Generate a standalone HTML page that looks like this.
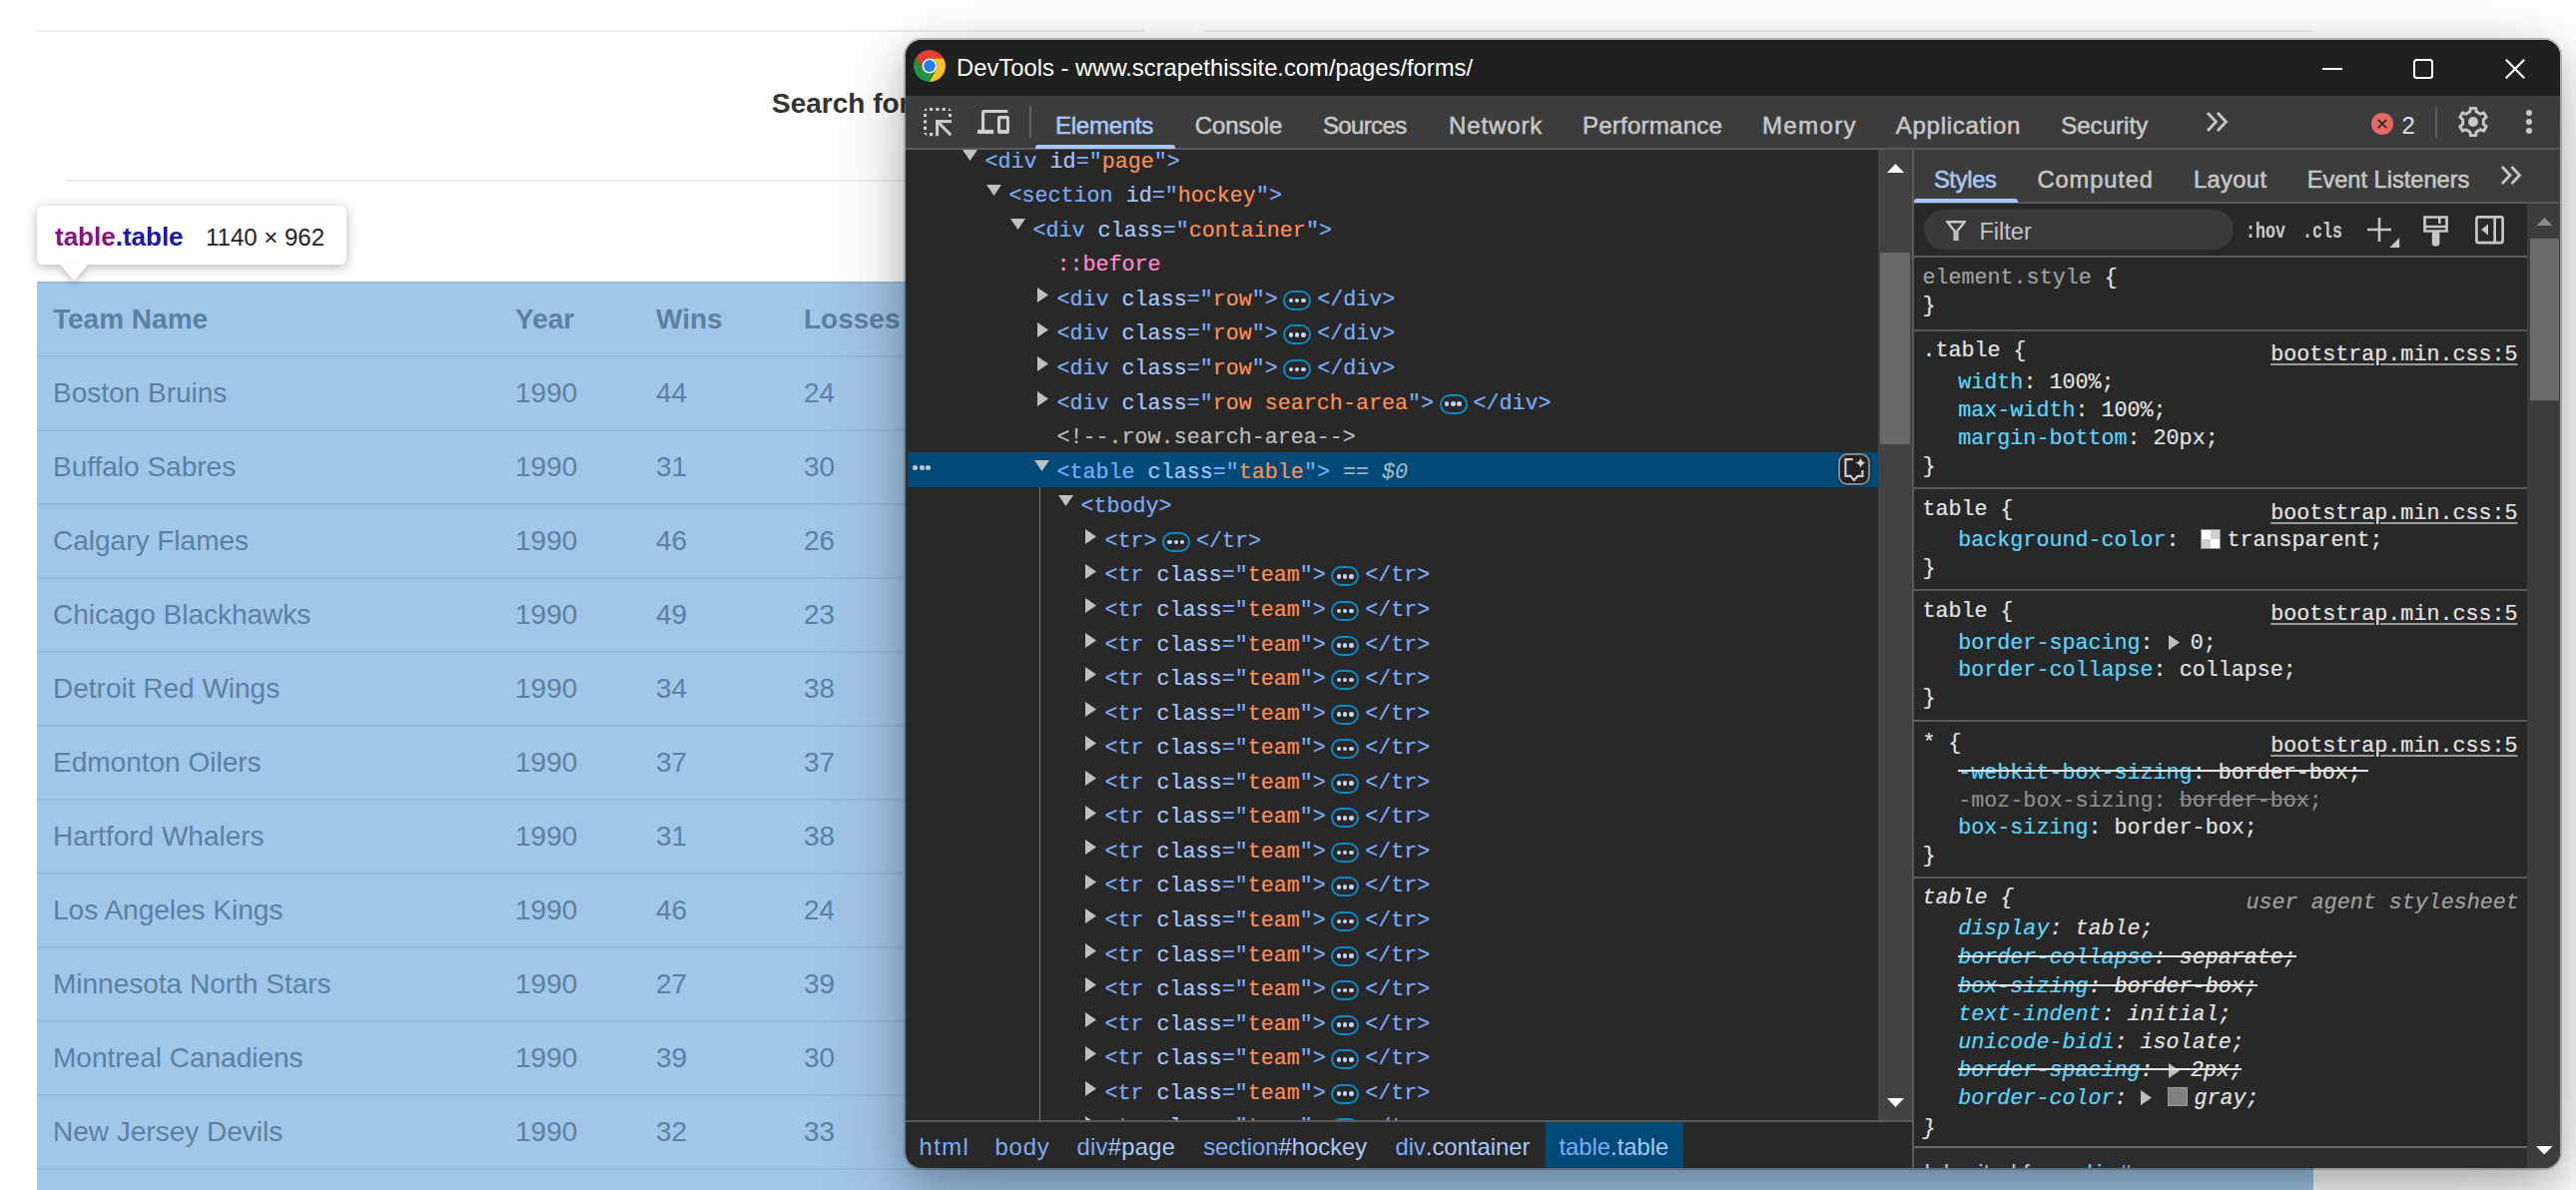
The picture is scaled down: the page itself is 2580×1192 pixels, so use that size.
<!DOCTYPE html>
<html><head><meta charset="utf-8">
<style>
*{box-sizing:border-box}
html,body{margin:0;padding:0}
body{width:2580px;height:1192px;position:relative;overflow:hidden;background:#fff;font-family:"Liberation Sans",sans-serif}
.a{position:absolute;white-space:pre}
.hr{position:absolute;height:2px;background:#eee}
.h3{position:absolute;left:773px;top:84px;font:bold 28px/40px "Liberation Sans",sans-serif;color:#333;white-space:nowrap}
table.t{position:absolute;left:37px;top:282px;width:2280px;border-collapse:collapse;font:28px/40px "Liberation Sans",sans-serif;color:#333}
table.t td,table.t th{border-top:2px solid #ddd;padding:16px;text-align:left;vertical-align:top;white-space:nowrap}
.ov{position:absolute;left:37px;top:282px;width:2280px;height:920px;background:rgba(111,168,220,.66)}
.tip{position:absolute;left:37px;top:206px;width:310px;height:59px;background:#fff;border-radius:6px;box-shadow:0 2px 12px rgba(0,0,0,.30)}
.tipar{position:absolute;left:59px;top:264px;width:0;height:0;border-left:15px solid transparent;border-right:15px solid transparent;border-top:17px solid #fff;filter:drop-shadow(0 4px 3px rgba(0,0,0,.2))}
.shadow{position:absolute;left:907px;top:40px;width:1657px;height:1129.5px;border-radius:16px;box-shadow:0 12px 36px rgba(0,0,0,.22),0 28px 90px rgba(0,0,0,.2)}
.winbg{position:absolute;left:907px;top:40px;width:1657px;height:1129.5px;border-radius:16px;background:#282828;box-shadow:0 0 0 2px rgba(60,60,60,.3)}
.clip{position:absolute;overflow:hidden}
.btn{position:absolute;width:28px;height:20px;border:2.2px solid #0a8bc9;border-radius:10px}
.btn i{position:absolute;top:5.7px;width:4.6px;height:4.6px;border-radius:50%;background:#c2d6f5}
</style></head>
<body>

<div class="hr" style="left:36px;top:30px;width:1110px"></div>
<div class="hr" style="left:1206px;top:30px;width:1110px"></div>
<div class="hr" style="left:66px;top:180px;width:2220px"></div>
<div class="h3">Search for Teams</div>
<table class="t"><tr><th style="width:463px">Team Name</th><th style="width:141px">Year</th><th style="width:148px">Wins</th><th>Losses</th></tr>
<tr><td>Boston Bruins</td><td>1990</td><td>44</td><td>24</td></tr>
<tr><td>Buffalo Sabres</td><td>1990</td><td>31</td><td>30</td></tr>
<tr><td>Calgary Flames</td><td>1990</td><td>46</td><td>26</td></tr>
<tr><td>Chicago Blackhawks</td><td>1990</td><td>49</td><td>23</td></tr>
<tr><td>Detroit Red Wings</td><td>1990</td><td>34</td><td>38</td></tr>
<tr><td>Edmonton Oilers</td><td>1990</td><td>37</td><td>37</td></tr>
<tr><td>Hartford Whalers</td><td>1990</td><td>31</td><td>38</td></tr>
<tr><td>Los Angeles Kings</td><td>1990</td><td>46</td><td>24</td></tr>
<tr><td>Minnesota North Stars</td><td>1990</td><td>27</td><td>39</td></tr>
<tr><td>Montreal Canadiens</td><td>1990</td><td>39</td><td>30</td></tr>
<tr><td>New Jersey Devils</td><td>1990</td><td>32</td><td>33</td></tr>
<tr><td>New York Islanders</td><td>1990</td><td>25</td><td>45</td></tr>
</table><div class="ov"></div>
<div class="tip"></div><div class="tipar"></div>
<div class="a" style="left:55.00px;top:222.00px;font:normal bold 26px/30px 'Liberation Sans',sans-serif;color:#881280;">table</div>
<div class="a" style="left:115.68px;top:222.00px;font:normal bold 26px/30px 'Liberation Sans',sans-serif;color:#1a1aa6;">.table</div>
<div class="a" style="left:206.00px;top:224.00px;font:normal normal 24px/27px 'Liberation Sans',sans-serif;color:#222;">1140 × 962</div>
<div class="shadow"></div><div class="winbg"></div>
<div class="clip" style="left:907px;top:40px;width:1657px;height:1129.5px;border-radius:16px">
<div style="position:absolute;left:-907px;top:-40px;width:2580px;height:1192px">
<div class="a" style="left:906.00px;top:39.00px;width:1658.00px;height:57.00px;background:#1f2020;"></div>
<svg class="a" style="left:915px;top:50px;" width="32" height="32" viewBox="0 0 32 32"><g transform="translate(16.0,16.0)">
<path d="M0.00,-7.60 L14.08,-7.60 A16.0,16.0 0 0 0 -13.62,-8.39 L-6.58,3.80 A7.6,7.6 0 0 1 0.00,-7.60 Z" fill="#e33e32"/>
<path d="M6.58,3.80 L-0.46,15.99 A16.0,16.0 0 0 0 14.08,-7.60 L0.00,-7.60 A7.6,7.6 0 0 1 6.58,3.80 Z" fill="#fcc31e"/>
<path d="M-6.58,3.80 L-13.62,-8.39 A16.0,16.0 0 0 0 -0.46,15.99 L6.58,3.80 A7.6,7.6 0 0 1 -6.58,3.80 Z" fill="#219541"/>
<circle r="7.6" fill="#fff"/><circle r="5.9" fill="#2b7ce9"/></g></svg>
<div class="a" style="left:958.00px;top:54.10px;font:normal normal 23.8px/27px 'Liberation Sans',sans-serif;color:#ffffff;">DevTools - www.scrapethissite.com/pages/forms/</div>
<div class="a" style="left:2326.00px;top:68.00px;width:20.00px;height:2.20px;background:#fff;"></div>
<div class="a" style="left:2417px;top:59.3px;width:20px;height:19.5px;border:2.2px solid #fff;border-radius:3.5px"></div>
<svg class="a" style="left:2509px;top:59px;" width="20" height="20" viewBox="0 0 20 20"><path d="M0.8,0.8 L19.2,19.2 M19.2,0.8 L0.8,19.2" stroke="#fff" stroke-width="2.2"/></svg>
<div class="a" style="left:906.00px;top:96.00px;width:1658.00px;height:52.00px;background:#3c3c3c;"></div>
<div class="a" style="left:906.00px;top:148.00px;width:1658.00px;height:2.00px;background:#5a5a5a;"></div>
<svg class="a" style="left:924px;top:107px;" width="31" height="31" viewBox="0 0 31 31"><g fill="#d0d0d0">
<polygon points="4.1,1 4.1,3.9 1,3.9"/><polygon points="26,1 29.1,3.9 26,3.9"/><polygon points="1,26 4.1,26 4.1,29.2"/>
<rect x="7" y="1" width="3.2" height="2.9"/><rect x="13.1" y="1" width="3.4" height="2.9"/><rect x="19.6" y="1" width="3.2" height="2.9"/>
<rect x="1" y="7.1" width="3.1" height="2.9"/><rect x="1" y="13.4" width="3.1" height="3.1"/><rect x="1" y="19.7" width="3.1" height="3.2"/>
<rect x="26" y="7.1" width="3.1" height="2.9"/><rect x="7" y="26" width="3.2" height="3.2"/>
<rect x="13.1" y="13.1" width="3" height="16.1"/><rect x="13.1" y="13.1" width="16" height="3"/>
</g><path d="M14.8,14.8 L28.3,28.3" stroke="#d0d0d0" stroke-width="3"/></svg>
<svg class="a" style="left:979px;top:109px;" width="33" height="26" viewBox="0 0 33 26"><g fill="#d0d0d0">
<path d="M4,21 V4 Q4,1 7,1 H30.2 V3.9 H7.1 V21 Z"/>
<rect x="0" y="20.9" width="16.1" height="4.1"/>
<path fill-rule="evenodd" d="M22,7 H29.9 Q31.9,7 31.9,9 V23 Q31.9,25 29.9,25 H22 Q20,25 20,23 V9 Q20,7 22,7 Z M23.1,10.2 V20.9 H29 V10.2 Z"/>
</g></svg>
<div class="a" style="left:1031.00px;top:106.00px;width:1.80px;height:32.00px;background:#5f5f5f;"></div>
<div class="a" style="left:1057.00px;top:111.80px;font:normal normal 24.0px/27px 'Liberation Sans',sans-serif;color:#a8c7fa;-webkit-text-stroke:0.55px currentColor;letter-spacing:-0.26px">Elements</div>
<div class="a" style="left:1196.80px;top:111.80px;font:normal normal 24.0px/27px 'Liberation Sans',sans-serif;color:#c7c7c7;-webkit-text-stroke:0.55px currentColor;letter-spacing:-0.1px">Console</div>
<div class="a" style="left:1324.90px;top:111.80px;font:normal normal 24.0px/27px 'Liberation Sans',sans-serif;color:#c7c7c7;-webkit-text-stroke:0.55px currentColor;letter-spacing:-0.62px">Sources</div>
<div class="a" style="left:1451.00px;top:111.80px;font:normal normal 24.0px/27px 'Liberation Sans',sans-serif;color:#c7c7c7;-webkit-text-stroke:0.55px currentColor;letter-spacing:0.87px">Network</div>
<div class="a" style="left:1585.00px;top:111.80px;font:normal normal 24.0px/27px 'Liberation Sans',sans-serif;color:#c7c7c7;-webkit-text-stroke:0.55px currentColor;letter-spacing:0.25px">Performance</div>
<div class="a" style="left:1764.90px;top:111.80px;font:normal normal 24.0px/27px 'Liberation Sans',sans-serif;color:#c7c7c7;-webkit-text-stroke:0.55px currentColor;letter-spacing:1.4px">Memory</div>
<div class="a" style="left:1898.80px;top:111.80px;font:normal normal 24.0px/27px 'Liberation Sans',sans-serif;color:#c7c7c7;-webkit-text-stroke:0.55px currentColor;letter-spacing:0.72px">Application</div>
<div class="a" style="left:2064.20px;top:111.80px;font:normal normal 24.0px/27px 'Liberation Sans',sans-serif;color:#c7c7c7;-webkit-text-stroke:0.55px currentColor;letter-spacing:0.04px">Security</div>
<div class="a" style="left:1036.80px;top:145.40px;width:140.40px;height:3.20px;background:#a8c7fa;border-radius:3px 3px 0 0"></div>
<svg class="a" style="left:2208px;top:111px;" width="26" height="22" viewBox="0 0 26 22"><path d="M3,2 L11.5,11 L3,20 M13,2 L21.5,11 L13,20" stroke="#c7c7c7" stroke-width="2.8" fill="none"/></svg>
<svg class="a" style="left:2375px;top:113px;" width="22" height="22" viewBox="0 0 22 22"><circle cx="11" cy="11" r="11" fill="#e46962"/><path d="M6.8,6.8 L15.2,15.2 M15.2,6.8 L6.8,15.2" stroke="#2a2a2a" stroke-width="1.8"/></svg>
<div class="a" style="left:2405.50px;top:112.00px;font:normal normal 23.8px/27px 'Liberation Sans',sans-serif;color:#e3e3e3;">2</div>
<div class="a" style="left:2439.30px;top:106.60px;width:1.80px;height:31.00px;background:#5f5f5f;"></div>
<svg class="a" style="left:2462px;top:107px;" width="30" height="30" viewBox="0 0 30 30"><polygon points="11.90,4.86 12.33,1.26 17.67,1.26 18.10,4.86 22.23,7.25 25.57,5.82 28.24,10.44 25.33,12.62 25.33,17.38 28.24,19.56 25.57,24.18 22.23,22.75 18.10,25.14 17.67,28.74 12.33,28.74 11.90,25.14 7.77,22.75 4.43,24.18 1.76,19.56 4.67,17.38 4.67,12.62 1.76,10.44 4.43,5.82 7.77,7.25" fill="none" stroke="#c7c7c7" stroke-width="2.9" stroke-linejoin="round"/><circle cx="15" cy="15" r="5" fill="#c7c7c7"/></svg>
<div class="a" style="left:2529.85px;top:109.75px;width:6.3px;height:6.3px;border-radius:50%;background:#c7c7c7"></div>
<div class="a" style="left:2529.85px;top:118.85px;width:6.3px;height:6.3px;border-radius:50%;background:#c7c7c7"></div>
<div class="a" style="left:2529.85px;top:127.85px;width:6.3px;height:6.3px;border-radius:50%;background:#c7c7c7"></div>
<div class="clip" style="left:906px;top:150px;width:975px;height:972px">
<div style="position:absolute;left:-906px;top:-150px;width:2580px;height:1192px">
<div class="a" style="left:909.00px;top:453.30px;width:972.00px;height:34.80px;background:#004a77;"></div>
<div class="a" style="left:1041.00px;top:488.00px;width:1.20px;height:640.00px;background:#7a7a7a;"></div>
<svg class="a" style="left:964.2px;top:149.95999999999998px;" width="15" height="11" viewBox="0 0 15 11"><polygon points="0,0 15,0 7.5,11" fill="#c0c0c0"/></svg>
<div class="a" style="left:986.50px;top:149.66px;font:normal normal 21.7px/25px 'Liberation Mono',monospace;color:#7cacf8;-webkit-text-stroke:0.2px currentColor;">&lt;div</div>
<div class="a" style="left:1038.58px;top:149.66px;font:normal normal 21.7px/25px 'Liberation Mono',monospace;color:#a8c7fa;-webkit-text-stroke:0.2px currentColor;"> id</div>
<div class="a" style="left:1077.64px;top:149.66px;font:normal normal 21.7px/25px 'Liberation Mono',monospace;color:#7cacf8;-webkit-text-stroke:0.2px currentColor;">=&quot;</div>
<div class="a" style="left:1103.68px;top:149.66px;font:normal normal 21.7px/25px 'Liberation Mono',monospace;color:#fc8f55;-webkit-text-stroke:0.2px currentColor;">page</div>
<div class="a" style="left:1155.76px;top:149.66px;font:normal normal 21.7px/25px 'Liberation Mono',monospace;color:#7cacf8;-webkit-text-stroke:0.2px currentColor;">&quot;&gt;</div>
<svg class="a" style="left:988.2px;top:184.51999999999998px;" width="15" height="11" viewBox="0 0 15 11"><polygon points="0,0 15,0 7.5,11" fill="#c0c0c0"/></svg>
<div class="a" style="left:1010.50px;top:184.22px;font:normal normal 21.7px/25px 'Liberation Mono',monospace;color:#7cacf8;-webkit-text-stroke:0.2px currentColor;">&lt;section</div>
<div class="a" style="left:1114.66px;top:184.22px;font:normal normal 21.7px/25px 'Liberation Mono',monospace;color:#a8c7fa;-webkit-text-stroke:0.2px currentColor;"> id</div>
<div class="a" style="left:1153.72px;top:184.22px;font:normal normal 21.7px/25px 'Liberation Mono',monospace;color:#7cacf8;-webkit-text-stroke:0.2px currentColor;">=&quot;</div>
<div class="a" style="left:1179.76px;top:184.22px;font:normal normal 21.7px/25px 'Liberation Mono',monospace;color:#fc8f55;-webkit-text-stroke:0.2px currentColor;">hockey</div>
<div class="a" style="left:1257.88px;top:184.22px;font:normal normal 21.7px/25px 'Liberation Mono',monospace;color:#7cacf8;-webkit-text-stroke:0.2px currentColor;">&quot;&gt;</div>
<svg class="a" style="left:1012.2px;top:219.07999999999998px;" width="15" height="11" viewBox="0 0 15 11"><polygon points="0,0 15,0 7.5,11" fill="#c0c0c0"/></svg>
<div class="a" style="left:1034.50px;top:218.78px;font:normal normal 21.7px/25px 'Liberation Mono',monospace;color:#7cacf8;-webkit-text-stroke:0.2px currentColor;">&lt;div</div>
<div class="a" style="left:1086.58px;top:218.78px;font:normal normal 21.7px/25px 'Liberation Mono',monospace;color:#a8c7fa;-webkit-text-stroke:0.2px currentColor;"> class</div>
<div class="a" style="left:1164.70px;top:218.78px;font:normal normal 21.7px/25px 'Liberation Mono',monospace;color:#7cacf8;-webkit-text-stroke:0.2px currentColor;">=&quot;</div>
<div class="a" style="left:1190.74px;top:218.78px;font:normal normal 21.7px/25px 'Liberation Mono',monospace;color:#fc8f55;-webkit-text-stroke:0.2px currentColor;">container</div>
<div class="a" style="left:1307.92px;top:218.78px;font:normal normal 21.7px/25px 'Liberation Mono',monospace;color:#7cacf8;-webkit-text-stroke:0.2px currentColor;">&quot;&gt;</div>
<div class="a" style="left:1058.50px;top:253.34px;font:normal normal 21.7px/25px 'Liberation Mono',monospace;color:#ff8bcb;-webkit-text-stroke:0.2px currentColor;">::before</div>
<svg class="a" style="left:1039.0px;top:288.1px;" width="11" height="15" viewBox="0 0 11 15"><polygon points="0,0 11,7.5 0,15" fill="#c0c0c0"/></svg>
<div class="a" style="left:1058.50px;top:287.90px;font:normal normal 21.7px/25px 'Liberation Mono',monospace;color:#7cacf8;-webkit-text-stroke:0.2px currentColor;">&lt;div</div>
<div class="a" style="left:1110.58px;top:287.90px;font:normal normal 21.7px/25px 'Liberation Mono',monospace;color:#a8c7fa;-webkit-text-stroke:0.2px currentColor;"> class</div>
<div class="a" style="left:1188.70px;top:287.90px;font:normal normal 21.7px/25px 'Liberation Mono',monospace;color:#7cacf8;-webkit-text-stroke:0.2px currentColor;">=&quot;</div>
<div class="a" style="left:1214.74px;top:287.90px;font:normal normal 21.7px/25px 'Liberation Mono',monospace;color:#fc8f55;-webkit-text-stroke:0.2px currentColor;">row</div>
<div class="a" style="left:1253.80px;top:287.90px;font:normal normal 21.7px/25px 'Liberation Mono',monospace;color:#7cacf8;-webkit-text-stroke:0.2px currentColor;">&quot;&gt;</div>
<div class="btn" style="left:1285.34px;top:290.90px"><i style="left:3.3px"></i><i style="left:9.5px"></i><i style="left:15.7px"></i></div>
<div class="a" style="left:1319.14px;top:287.90px;font:normal normal 21.7px/25px 'Liberation Mono',monospace;color:#7cacf8;-webkit-text-stroke:0.2px currentColor;">&lt;/div&gt;</div>
<svg class="a" style="left:1039.0px;top:322.66px;" width="11" height="15" viewBox="0 0 11 15"><polygon points="0,0 11,7.5 0,15" fill="#c0c0c0"/></svg>
<div class="a" style="left:1058.50px;top:322.46px;font:normal normal 21.7px/25px 'Liberation Mono',monospace;color:#7cacf8;-webkit-text-stroke:0.2px currentColor;">&lt;div</div>
<div class="a" style="left:1110.58px;top:322.46px;font:normal normal 21.7px/25px 'Liberation Mono',monospace;color:#a8c7fa;-webkit-text-stroke:0.2px currentColor;"> class</div>
<div class="a" style="left:1188.70px;top:322.46px;font:normal normal 21.7px/25px 'Liberation Mono',monospace;color:#7cacf8;-webkit-text-stroke:0.2px currentColor;">=&quot;</div>
<div class="a" style="left:1214.74px;top:322.46px;font:normal normal 21.7px/25px 'Liberation Mono',monospace;color:#fc8f55;-webkit-text-stroke:0.2px currentColor;">row</div>
<div class="a" style="left:1253.80px;top:322.46px;font:normal normal 21.7px/25px 'Liberation Mono',monospace;color:#7cacf8;-webkit-text-stroke:0.2px currentColor;">&quot;&gt;</div>
<div class="btn" style="left:1285.34px;top:325.46px"><i style="left:3.3px"></i><i style="left:9.5px"></i><i style="left:15.7px"></i></div>
<div class="a" style="left:1319.14px;top:322.46px;font:normal normal 21.7px/25px 'Liberation Mono',monospace;color:#7cacf8;-webkit-text-stroke:0.2px currentColor;">&lt;/div&gt;</div>
<svg class="a" style="left:1039.0px;top:357.22px;" width="11" height="15" viewBox="0 0 11 15"><polygon points="0,0 11,7.5 0,15" fill="#c0c0c0"/></svg>
<div class="a" style="left:1058.50px;top:357.02px;font:normal normal 21.7px/25px 'Liberation Mono',monospace;color:#7cacf8;-webkit-text-stroke:0.2px currentColor;">&lt;div</div>
<div class="a" style="left:1110.58px;top:357.02px;font:normal normal 21.7px/25px 'Liberation Mono',monospace;color:#a8c7fa;-webkit-text-stroke:0.2px currentColor;"> class</div>
<div class="a" style="left:1188.70px;top:357.02px;font:normal normal 21.7px/25px 'Liberation Mono',monospace;color:#7cacf8;-webkit-text-stroke:0.2px currentColor;">=&quot;</div>
<div class="a" style="left:1214.74px;top:357.02px;font:normal normal 21.7px/25px 'Liberation Mono',monospace;color:#fc8f55;-webkit-text-stroke:0.2px currentColor;">row</div>
<div class="a" style="left:1253.80px;top:357.02px;font:normal normal 21.7px/25px 'Liberation Mono',monospace;color:#7cacf8;-webkit-text-stroke:0.2px currentColor;">&quot;&gt;</div>
<div class="btn" style="left:1285.34px;top:360.02px"><i style="left:3.3px"></i><i style="left:9.5px"></i><i style="left:15.7px"></i></div>
<div class="a" style="left:1319.14px;top:357.02px;font:normal normal 21.7px/25px 'Liberation Mono',monospace;color:#7cacf8;-webkit-text-stroke:0.2px currentColor;">&lt;/div&gt;</div>
<svg class="a" style="left:1039.0px;top:391.78000000000003px;" width="11" height="15" viewBox="0 0 11 15"><polygon points="0,0 11,7.5 0,15" fill="#c0c0c0"/></svg>
<div class="a" style="left:1058.50px;top:391.58px;font:normal normal 21.7px/25px 'Liberation Mono',monospace;color:#7cacf8;-webkit-text-stroke:0.2px currentColor;">&lt;div</div>
<div class="a" style="left:1110.58px;top:391.58px;font:normal normal 21.7px/25px 'Liberation Mono',monospace;color:#a8c7fa;-webkit-text-stroke:0.2px currentColor;"> class</div>
<div class="a" style="left:1188.70px;top:391.58px;font:normal normal 21.7px/25px 'Liberation Mono',monospace;color:#7cacf8;-webkit-text-stroke:0.2px currentColor;">=&quot;</div>
<div class="a" style="left:1214.74px;top:391.58px;font:normal normal 21.7px/25px 'Liberation Mono',monospace;color:#fc8f55;-webkit-text-stroke:0.2px currentColor;">row search-area</div>
<div class="a" style="left:1410.04px;top:391.58px;font:normal normal 21.7px/25px 'Liberation Mono',monospace;color:#7cacf8;-webkit-text-stroke:0.2px currentColor;">&quot;&gt;</div>
<div class="btn" style="left:1441.58px;top:394.58px"><i style="left:3.3px"></i><i style="left:9.5px"></i><i style="left:15.7px"></i></div>
<div class="a" style="left:1475.38px;top:391.58px;font:normal normal 21.7px/25px 'Liberation Mono',monospace;color:#7cacf8;-webkit-text-stroke:0.2px currentColor;">&lt;/div&gt;</div>
<div class="a" style="left:1058.50px;top:426.14px;font:normal normal 21.7px/25px 'Liberation Mono',monospace;color:#bdbdbd;-webkit-text-stroke:0.2px currentColor;">&lt;!--.row.search-area--&gt;</div>
<svg class="a" style="left:1036.2px;top:461.0px;" width="15" height="11" viewBox="0 0 15 11"><polygon points="0,0 15,0 7.5,11" fill="#c0c0c0"/></svg>
<div class="a" style="left:1058.50px;top:460.70px;font:normal normal 21.7px/25px 'Liberation Mono',monospace;color:#7cacf8;-webkit-text-stroke:0.2px currentColor;">&lt;table</div>
<div class="a" style="left:1136.62px;top:460.70px;font:normal normal 21.7px/25px 'Liberation Mono',monospace;color:#a8c7fa;-webkit-text-stroke:0.2px currentColor;"> class</div>
<div class="a" style="left:1214.74px;top:460.70px;font:normal normal 21.7px/25px 'Liberation Mono',monospace;color:#7cacf8;-webkit-text-stroke:0.2px currentColor;">=&quot;</div>
<div class="a" style="left:1240.78px;top:460.70px;font:normal normal 21.7px/25px 'Liberation Mono',monospace;color:#fc8f55;-webkit-text-stroke:0.2px currentColor;">table</div>
<div class="a" style="left:1305.88px;top:460.70px;font:normal normal 21.7px/25px 'Liberation Mono',monospace;color:#7cacf8;-webkit-text-stroke:0.2px currentColor;">&quot;&gt;</div>
<div class="a" style="left:1331.92px;top:460.70px;font:normal normal 21.7px/25px 'Liberation Mono',monospace;color:#9db6c6;-webkit-text-stroke:0.2px currentColor;"> == </div>
<div class="a" style="left:1384.00px;top:460.70px;font:italic normal 21.7px/25px 'Liberation Mono',monospace;color:#9db6c6;-webkit-text-stroke:0.2px currentColor;">$0</div>
<div class="a" style="left:913.6px;top:466.2px;width:5px;height:5px;border-radius:50%;background:#c8c8c8"></div>
<div class="a" style="left:920.5px;top:466.2px;width:5px;height:5px;border-radius:50%;background:#c8c8c8"></div>
<div class="a" style="left:927.4px;top:466.2px;width:5px;height:5px;border-radius:50%;background:#c8c8c8"></div>
<svg class="a" style="left:1060.2px;top:495.56px;" width="15" height="11" viewBox="0 0 15 11"><polygon points="0,0 15,0 7.5,11" fill="#c0c0c0"/></svg>
<div class="a" style="left:1082.50px;top:495.26px;font:normal normal 21.7px/25px 'Liberation Mono',monospace;color:#7cacf8;-webkit-text-stroke:0.2px currentColor;">&lt;tbody&gt;</div>
<svg class="a" style="left:1087.0px;top:530.0200000000001px;" width="11" height="15" viewBox="0 0 11 15"><polygon points="0,0 11,7.5 0,15" fill="#c0c0c0"/></svg>
<div class="a" style="left:1106.50px;top:529.82px;font:normal normal 21.7px/25px 'Liberation Mono',monospace;color:#7cacf8;-webkit-text-stroke:0.2px currentColor;">&lt;tr&gt;</div>
<div class="btn" style="left:1164.08px;top:532.82px"><i style="left:3.3px"></i><i style="left:9.5px"></i><i style="left:15.7px"></i></div>
<div class="a" style="left:1197.88px;top:529.82px;font:normal normal 21.7px/25px 'Liberation Mono',monospace;color:#7cacf8;-webkit-text-stroke:0.2px currentColor;">&lt;/tr&gt;</div>
<svg class="a" style="left:1087.0px;top:564.58px;" width="11" height="15" viewBox="0 0 11 15"><polygon points="0,0 11,7.5 0,15" fill="#c0c0c0"/></svg>
<div class="a" style="left:1106.50px;top:564.38px;font:normal normal 21.7px/25px 'Liberation Mono',monospace;color:#7cacf8;-webkit-text-stroke:0.2px currentColor;">&lt;</div>
<div class="a" style="left:1119.52px;top:564.38px;font:normal normal 21.7px/25px 'Liberation Mono',monospace;color:#7cacf8;-webkit-text-stroke:0.2px currentColor;">tr</div>
<div class="a" style="left:1145.56px;top:564.38px;font:normal normal 21.7px/25px 'Liberation Mono',monospace;color:#7cacf8;-webkit-text-stroke:0.2px currentColor;"> </div>
<div class="a" style="left:1158.58px;top:564.38px;font:normal normal 21.7px/25px 'Liberation Mono',monospace;color:#a8c7fa;-webkit-text-stroke:0.2px currentColor;">class</div>
<div class="a" style="left:1223.68px;top:564.38px;font:normal normal 21.7px/25px 'Liberation Mono',monospace;color:#7cacf8;-webkit-text-stroke:0.2px currentColor;">=&quot;</div>
<div class="a" style="left:1249.72px;top:564.38px;font:normal normal 21.7px/25px 'Liberation Mono',monospace;color:#fc8f55;-webkit-text-stroke:0.2px currentColor;">team</div>
<div class="a" style="left:1301.80px;top:564.38px;font:normal normal 21.7px/25px 'Liberation Mono',monospace;color:#7cacf8;-webkit-text-stroke:0.2px currentColor;">&quot;&gt;</div>
<div class="btn" style="left:1333.34px;top:567.38px"><i style="left:3.3px"></i><i style="left:9.5px"></i><i style="left:15.7px"></i></div>
<div class="a" style="left:1367.14px;top:564.38px;font:normal normal 21.7px/25px 'Liberation Mono',monospace;color:#7cacf8;-webkit-text-stroke:0.2px currentColor;">&lt;/tr&gt;</div>
<svg class="a" style="left:1087.0px;top:599.14px;" width="11" height="15" viewBox="0 0 11 15"><polygon points="0,0 11,7.5 0,15" fill="#c0c0c0"/></svg>
<div class="a" style="left:1106.50px;top:598.94px;font:normal normal 21.7px/25px 'Liberation Mono',monospace;color:#7cacf8;-webkit-text-stroke:0.2px currentColor;">&lt;</div>
<div class="a" style="left:1119.52px;top:598.94px;font:normal normal 21.7px/25px 'Liberation Mono',monospace;color:#7cacf8;-webkit-text-stroke:0.2px currentColor;">tr</div>
<div class="a" style="left:1145.56px;top:598.94px;font:normal normal 21.7px/25px 'Liberation Mono',monospace;color:#7cacf8;-webkit-text-stroke:0.2px currentColor;"> </div>
<div class="a" style="left:1158.58px;top:598.94px;font:normal normal 21.7px/25px 'Liberation Mono',monospace;color:#a8c7fa;-webkit-text-stroke:0.2px currentColor;">class</div>
<div class="a" style="left:1223.68px;top:598.94px;font:normal normal 21.7px/25px 'Liberation Mono',monospace;color:#7cacf8;-webkit-text-stroke:0.2px currentColor;">=&quot;</div>
<div class="a" style="left:1249.72px;top:598.94px;font:normal normal 21.7px/25px 'Liberation Mono',monospace;color:#fc8f55;-webkit-text-stroke:0.2px currentColor;">team</div>
<div class="a" style="left:1301.80px;top:598.94px;font:normal normal 21.7px/25px 'Liberation Mono',monospace;color:#7cacf8;-webkit-text-stroke:0.2px currentColor;">&quot;&gt;</div>
<div class="btn" style="left:1333.34px;top:601.94px"><i style="left:3.3px"></i><i style="left:9.5px"></i><i style="left:15.7px"></i></div>
<div class="a" style="left:1367.14px;top:598.94px;font:normal normal 21.7px/25px 'Liberation Mono',monospace;color:#7cacf8;-webkit-text-stroke:0.2px currentColor;">&lt;/tr&gt;</div>
<svg class="a" style="left:1087.0px;top:633.7px;" width="11" height="15" viewBox="0 0 11 15"><polygon points="0,0 11,7.5 0,15" fill="#c0c0c0"/></svg>
<div class="a" style="left:1106.50px;top:633.50px;font:normal normal 21.7px/25px 'Liberation Mono',monospace;color:#7cacf8;-webkit-text-stroke:0.2px currentColor;">&lt;</div>
<div class="a" style="left:1119.52px;top:633.50px;font:normal normal 21.7px/25px 'Liberation Mono',monospace;color:#7cacf8;-webkit-text-stroke:0.2px currentColor;">tr</div>
<div class="a" style="left:1145.56px;top:633.50px;font:normal normal 21.7px/25px 'Liberation Mono',monospace;color:#7cacf8;-webkit-text-stroke:0.2px currentColor;"> </div>
<div class="a" style="left:1158.58px;top:633.50px;font:normal normal 21.7px/25px 'Liberation Mono',monospace;color:#a8c7fa;-webkit-text-stroke:0.2px currentColor;">class</div>
<div class="a" style="left:1223.68px;top:633.50px;font:normal normal 21.7px/25px 'Liberation Mono',monospace;color:#7cacf8;-webkit-text-stroke:0.2px currentColor;">=&quot;</div>
<div class="a" style="left:1249.72px;top:633.50px;font:normal normal 21.7px/25px 'Liberation Mono',monospace;color:#fc8f55;-webkit-text-stroke:0.2px currentColor;">team</div>
<div class="a" style="left:1301.80px;top:633.50px;font:normal normal 21.7px/25px 'Liberation Mono',monospace;color:#7cacf8;-webkit-text-stroke:0.2px currentColor;">&quot;&gt;</div>
<div class="btn" style="left:1333.34px;top:636.50px"><i style="left:3.3px"></i><i style="left:9.5px"></i><i style="left:15.7px"></i></div>
<div class="a" style="left:1367.14px;top:633.50px;font:normal normal 21.7px/25px 'Liberation Mono',monospace;color:#7cacf8;-webkit-text-stroke:0.2px currentColor;">&lt;/tr&gt;</div>
<svg class="a" style="left:1087.0px;top:668.2600000000001px;" width="11" height="15" viewBox="0 0 11 15"><polygon points="0,0 11,7.5 0,15" fill="#c0c0c0"/></svg>
<div class="a" style="left:1106.50px;top:668.06px;font:normal normal 21.7px/25px 'Liberation Mono',monospace;color:#7cacf8;-webkit-text-stroke:0.2px currentColor;">&lt;</div>
<div class="a" style="left:1119.52px;top:668.06px;font:normal normal 21.7px/25px 'Liberation Mono',monospace;color:#7cacf8;-webkit-text-stroke:0.2px currentColor;">tr</div>
<div class="a" style="left:1145.56px;top:668.06px;font:normal normal 21.7px/25px 'Liberation Mono',monospace;color:#7cacf8;-webkit-text-stroke:0.2px currentColor;"> </div>
<div class="a" style="left:1158.58px;top:668.06px;font:normal normal 21.7px/25px 'Liberation Mono',monospace;color:#a8c7fa;-webkit-text-stroke:0.2px currentColor;">class</div>
<div class="a" style="left:1223.68px;top:668.06px;font:normal normal 21.7px/25px 'Liberation Mono',monospace;color:#7cacf8;-webkit-text-stroke:0.2px currentColor;">=&quot;</div>
<div class="a" style="left:1249.72px;top:668.06px;font:normal normal 21.7px/25px 'Liberation Mono',monospace;color:#fc8f55;-webkit-text-stroke:0.2px currentColor;">team</div>
<div class="a" style="left:1301.80px;top:668.06px;font:normal normal 21.7px/25px 'Liberation Mono',monospace;color:#7cacf8;-webkit-text-stroke:0.2px currentColor;">&quot;&gt;</div>
<div class="btn" style="left:1333.34px;top:671.06px"><i style="left:3.3px"></i><i style="left:9.5px"></i><i style="left:15.7px"></i></div>
<div class="a" style="left:1367.14px;top:668.06px;font:normal normal 21.7px/25px 'Liberation Mono',monospace;color:#7cacf8;-webkit-text-stroke:0.2px currentColor;">&lt;/tr&gt;</div>
<svg class="a" style="left:1087.0px;top:702.82px;" width="11" height="15" viewBox="0 0 11 15"><polygon points="0,0 11,7.5 0,15" fill="#c0c0c0"/></svg>
<div class="a" style="left:1106.50px;top:702.62px;font:normal normal 21.7px/25px 'Liberation Mono',monospace;color:#7cacf8;-webkit-text-stroke:0.2px currentColor;">&lt;</div>
<div class="a" style="left:1119.52px;top:702.62px;font:normal normal 21.7px/25px 'Liberation Mono',monospace;color:#7cacf8;-webkit-text-stroke:0.2px currentColor;">tr</div>
<div class="a" style="left:1145.56px;top:702.62px;font:normal normal 21.7px/25px 'Liberation Mono',monospace;color:#7cacf8;-webkit-text-stroke:0.2px currentColor;"> </div>
<div class="a" style="left:1158.58px;top:702.62px;font:normal normal 21.7px/25px 'Liberation Mono',monospace;color:#a8c7fa;-webkit-text-stroke:0.2px currentColor;">class</div>
<div class="a" style="left:1223.68px;top:702.62px;font:normal normal 21.7px/25px 'Liberation Mono',monospace;color:#7cacf8;-webkit-text-stroke:0.2px currentColor;">=&quot;</div>
<div class="a" style="left:1249.72px;top:702.62px;font:normal normal 21.7px/25px 'Liberation Mono',monospace;color:#fc8f55;-webkit-text-stroke:0.2px currentColor;">team</div>
<div class="a" style="left:1301.80px;top:702.62px;font:normal normal 21.7px/25px 'Liberation Mono',monospace;color:#7cacf8;-webkit-text-stroke:0.2px currentColor;">&quot;&gt;</div>
<div class="btn" style="left:1333.34px;top:705.62px"><i style="left:3.3px"></i><i style="left:9.5px"></i><i style="left:15.7px"></i></div>
<div class="a" style="left:1367.14px;top:702.62px;font:normal normal 21.7px/25px 'Liberation Mono',monospace;color:#7cacf8;-webkit-text-stroke:0.2px currentColor;">&lt;/tr&gt;</div>
<svg class="a" style="left:1087.0px;top:737.38px;" width="11" height="15" viewBox="0 0 11 15"><polygon points="0,0 11,7.5 0,15" fill="#c0c0c0"/></svg>
<div class="a" style="left:1106.50px;top:737.18px;font:normal normal 21.7px/25px 'Liberation Mono',monospace;color:#7cacf8;-webkit-text-stroke:0.2px currentColor;">&lt;</div>
<div class="a" style="left:1119.52px;top:737.18px;font:normal normal 21.7px/25px 'Liberation Mono',monospace;color:#7cacf8;-webkit-text-stroke:0.2px currentColor;">tr</div>
<div class="a" style="left:1145.56px;top:737.18px;font:normal normal 21.7px/25px 'Liberation Mono',monospace;color:#7cacf8;-webkit-text-stroke:0.2px currentColor;"> </div>
<div class="a" style="left:1158.58px;top:737.18px;font:normal normal 21.7px/25px 'Liberation Mono',monospace;color:#a8c7fa;-webkit-text-stroke:0.2px currentColor;">class</div>
<div class="a" style="left:1223.68px;top:737.18px;font:normal normal 21.7px/25px 'Liberation Mono',monospace;color:#7cacf8;-webkit-text-stroke:0.2px currentColor;">=&quot;</div>
<div class="a" style="left:1249.72px;top:737.18px;font:normal normal 21.7px/25px 'Liberation Mono',monospace;color:#fc8f55;-webkit-text-stroke:0.2px currentColor;">team</div>
<div class="a" style="left:1301.80px;top:737.18px;font:normal normal 21.7px/25px 'Liberation Mono',monospace;color:#7cacf8;-webkit-text-stroke:0.2px currentColor;">&quot;&gt;</div>
<div class="btn" style="left:1333.34px;top:740.18px"><i style="left:3.3px"></i><i style="left:9.5px"></i><i style="left:15.7px"></i></div>
<div class="a" style="left:1367.14px;top:737.18px;font:normal normal 21.7px/25px 'Liberation Mono',monospace;color:#7cacf8;-webkit-text-stroke:0.2px currentColor;">&lt;/tr&gt;</div>
<svg class="a" style="left:1087.0px;top:771.94px;" width="11" height="15" viewBox="0 0 11 15"><polygon points="0,0 11,7.5 0,15" fill="#c0c0c0"/></svg>
<div class="a" style="left:1106.50px;top:771.74px;font:normal normal 21.7px/25px 'Liberation Mono',monospace;color:#7cacf8;-webkit-text-stroke:0.2px currentColor;">&lt;</div>
<div class="a" style="left:1119.52px;top:771.74px;font:normal normal 21.7px/25px 'Liberation Mono',monospace;color:#7cacf8;-webkit-text-stroke:0.2px currentColor;">tr</div>
<div class="a" style="left:1145.56px;top:771.74px;font:normal normal 21.7px/25px 'Liberation Mono',monospace;color:#7cacf8;-webkit-text-stroke:0.2px currentColor;"> </div>
<div class="a" style="left:1158.58px;top:771.74px;font:normal normal 21.7px/25px 'Liberation Mono',monospace;color:#a8c7fa;-webkit-text-stroke:0.2px currentColor;">class</div>
<div class="a" style="left:1223.68px;top:771.74px;font:normal normal 21.7px/25px 'Liberation Mono',monospace;color:#7cacf8;-webkit-text-stroke:0.2px currentColor;">=&quot;</div>
<div class="a" style="left:1249.72px;top:771.74px;font:normal normal 21.7px/25px 'Liberation Mono',monospace;color:#fc8f55;-webkit-text-stroke:0.2px currentColor;">team</div>
<div class="a" style="left:1301.80px;top:771.74px;font:normal normal 21.7px/25px 'Liberation Mono',monospace;color:#7cacf8;-webkit-text-stroke:0.2px currentColor;">&quot;&gt;</div>
<div class="btn" style="left:1333.34px;top:774.74px"><i style="left:3.3px"></i><i style="left:9.5px"></i><i style="left:15.7px"></i></div>
<div class="a" style="left:1367.14px;top:771.74px;font:normal normal 21.7px/25px 'Liberation Mono',monospace;color:#7cacf8;-webkit-text-stroke:0.2px currentColor;">&lt;/tr&gt;</div>
<svg class="a" style="left:1087.0px;top:806.5000000000001px;" width="11" height="15" viewBox="0 0 11 15"><polygon points="0,0 11,7.5 0,15" fill="#c0c0c0"/></svg>
<div class="a" style="left:1106.50px;top:806.30px;font:normal normal 21.7px/25px 'Liberation Mono',monospace;color:#7cacf8;-webkit-text-stroke:0.2px currentColor;">&lt;</div>
<div class="a" style="left:1119.52px;top:806.30px;font:normal normal 21.7px/25px 'Liberation Mono',monospace;color:#7cacf8;-webkit-text-stroke:0.2px currentColor;">tr</div>
<div class="a" style="left:1145.56px;top:806.30px;font:normal normal 21.7px/25px 'Liberation Mono',monospace;color:#7cacf8;-webkit-text-stroke:0.2px currentColor;"> </div>
<div class="a" style="left:1158.58px;top:806.30px;font:normal normal 21.7px/25px 'Liberation Mono',monospace;color:#a8c7fa;-webkit-text-stroke:0.2px currentColor;">class</div>
<div class="a" style="left:1223.68px;top:806.30px;font:normal normal 21.7px/25px 'Liberation Mono',monospace;color:#7cacf8;-webkit-text-stroke:0.2px currentColor;">=&quot;</div>
<div class="a" style="left:1249.72px;top:806.30px;font:normal normal 21.7px/25px 'Liberation Mono',monospace;color:#fc8f55;-webkit-text-stroke:0.2px currentColor;">team</div>
<div class="a" style="left:1301.80px;top:806.30px;font:normal normal 21.7px/25px 'Liberation Mono',monospace;color:#7cacf8;-webkit-text-stroke:0.2px currentColor;">&quot;&gt;</div>
<div class="btn" style="left:1333.34px;top:809.30px"><i style="left:3.3px"></i><i style="left:9.5px"></i><i style="left:15.7px"></i></div>
<div class="a" style="left:1367.14px;top:806.30px;font:normal normal 21.7px/25px 'Liberation Mono',monospace;color:#7cacf8;-webkit-text-stroke:0.2px currentColor;">&lt;/tr&gt;</div>
<svg class="a" style="left:1087.0px;top:841.0600000000001px;" width="11" height="15" viewBox="0 0 11 15"><polygon points="0,0 11,7.5 0,15" fill="#c0c0c0"/></svg>
<div class="a" style="left:1106.50px;top:840.86px;font:normal normal 21.7px/25px 'Liberation Mono',monospace;color:#7cacf8;-webkit-text-stroke:0.2px currentColor;">&lt;</div>
<div class="a" style="left:1119.52px;top:840.86px;font:normal normal 21.7px/25px 'Liberation Mono',monospace;color:#7cacf8;-webkit-text-stroke:0.2px currentColor;">tr</div>
<div class="a" style="left:1145.56px;top:840.86px;font:normal normal 21.7px/25px 'Liberation Mono',monospace;color:#7cacf8;-webkit-text-stroke:0.2px currentColor;"> </div>
<div class="a" style="left:1158.58px;top:840.86px;font:normal normal 21.7px/25px 'Liberation Mono',monospace;color:#a8c7fa;-webkit-text-stroke:0.2px currentColor;">class</div>
<div class="a" style="left:1223.68px;top:840.86px;font:normal normal 21.7px/25px 'Liberation Mono',monospace;color:#7cacf8;-webkit-text-stroke:0.2px currentColor;">=&quot;</div>
<div class="a" style="left:1249.72px;top:840.86px;font:normal normal 21.7px/25px 'Liberation Mono',monospace;color:#fc8f55;-webkit-text-stroke:0.2px currentColor;">team</div>
<div class="a" style="left:1301.80px;top:840.86px;font:normal normal 21.7px/25px 'Liberation Mono',monospace;color:#7cacf8;-webkit-text-stroke:0.2px currentColor;">&quot;&gt;</div>
<div class="btn" style="left:1333.34px;top:843.86px"><i style="left:3.3px"></i><i style="left:9.5px"></i><i style="left:15.7px"></i></div>
<div class="a" style="left:1367.14px;top:840.86px;font:normal normal 21.7px/25px 'Liberation Mono',monospace;color:#7cacf8;-webkit-text-stroke:0.2px currentColor;">&lt;/tr&gt;</div>
<svg class="a" style="left:1087.0px;top:875.62px;" width="11" height="15" viewBox="0 0 11 15"><polygon points="0,0 11,7.5 0,15" fill="#c0c0c0"/></svg>
<div class="a" style="left:1106.50px;top:875.42px;font:normal normal 21.7px/25px 'Liberation Mono',monospace;color:#7cacf8;-webkit-text-stroke:0.2px currentColor;">&lt;</div>
<div class="a" style="left:1119.52px;top:875.42px;font:normal normal 21.7px/25px 'Liberation Mono',monospace;color:#7cacf8;-webkit-text-stroke:0.2px currentColor;">tr</div>
<div class="a" style="left:1145.56px;top:875.42px;font:normal normal 21.7px/25px 'Liberation Mono',monospace;color:#7cacf8;-webkit-text-stroke:0.2px currentColor;"> </div>
<div class="a" style="left:1158.58px;top:875.42px;font:normal normal 21.7px/25px 'Liberation Mono',monospace;color:#a8c7fa;-webkit-text-stroke:0.2px currentColor;">class</div>
<div class="a" style="left:1223.68px;top:875.42px;font:normal normal 21.7px/25px 'Liberation Mono',monospace;color:#7cacf8;-webkit-text-stroke:0.2px currentColor;">=&quot;</div>
<div class="a" style="left:1249.72px;top:875.42px;font:normal normal 21.7px/25px 'Liberation Mono',monospace;color:#fc8f55;-webkit-text-stroke:0.2px currentColor;">team</div>
<div class="a" style="left:1301.80px;top:875.42px;font:normal normal 21.7px/25px 'Liberation Mono',monospace;color:#7cacf8;-webkit-text-stroke:0.2px currentColor;">&quot;&gt;</div>
<div class="btn" style="left:1333.34px;top:878.42px"><i style="left:3.3px"></i><i style="left:9.5px"></i><i style="left:15.7px"></i></div>
<div class="a" style="left:1367.14px;top:875.42px;font:normal normal 21.7px/25px 'Liberation Mono',monospace;color:#7cacf8;-webkit-text-stroke:0.2px currentColor;">&lt;/tr&gt;</div>
<svg class="a" style="left:1087.0px;top:910.1800000000001px;" width="11" height="15" viewBox="0 0 11 15"><polygon points="0,0 11,7.5 0,15" fill="#c0c0c0"/></svg>
<div class="a" style="left:1106.50px;top:909.98px;font:normal normal 21.7px/25px 'Liberation Mono',monospace;color:#7cacf8;-webkit-text-stroke:0.2px currentColor;">&lt;</div>
<div class="a" style="left:1119.52px;top:909.98px;font:normal normal 21.7px/25px 'Liberation Mono',monospace;color:#7cacf8;-webkit-text-stroke:0.2px currentColor;">tr</div>
<div class="a" style="left:1145.56px;top:909.98px;font:normal normal 21.7px/25px 'Liberation Mono',monospace;color:#7cacf8;-webkit-text-stroke:0.2px currentColor;"> </div>
<div class="a" style="left:1158.58px;top:909.98px;font:normal normal 21.7px/25px 'Liberation Mono',monospace;color:#a8c7fa;-webkit-text-stroke:0.2px currentColor;">class</div>
<div class="a" style="left:1223.68px;top:909.98px;font:normal normal 21.7px/25px 'Liberation Mono',monospace;color:#7cacf8;-webkit-text-stroke:0.2px currentColor;">=&quot;</div>
<div class="a" style="left:1249.72px;top:909.98px;font:normal normal 21.7px/25px 'Liberation Mono',monospace;color:#fc8f55;-webkit-text-stroke:0.2px currentColor;">team</div>
<div class="a" style="left:1301.80px;top:909.98px;font:normal normal 21.7px/25px 'Liberation Mono',monospace;color:#7cacf8;-webkit-text-stroke:0.2px currentColor;">&quot;&gt;</div>
<div class="btn" style="left:1333.34px;top:912.98px"><i style="left:3.3px"></i><i style="left:9.5px"></i><i style="left:15.7px"></i></div>
<div class="a" style="left:1367.14px;top:909.98px;font:normal normal 21.7px/25px 'Liberation Mono',monospace;color:#7cacf8;-webkit-text-stroke:0.2px currentColor;">&lt;/tr&gt;</div>
<svg class="a" style="left:1087.0px;top:944.7400000000001px;" width="11" height="15" viewBox="0 0 11 15"><polygon points="0,0 11,7.5 0,15" fill="#c0c0c0"/></svg>
<div class="a" style="left:1106.50px;top:944.54px;font:normal normal 21.7px/25px 'Liberation Mono',monospace;color:#7cacf8;-webkit-text-stroke:0.2px currentColor;">&lt;</div>
<div class="a" style="left:1119.52px;top:944.54px;font:normal normal 21.7px/25px 'Liberation Mono',monospace;color:#7cacf8;-webkit-text-stroke:0.2px currentColor;">tr</div>
<div class="a" style="left:1145.56px;top:944.54px;font:normal normal 21.7px/25px 'Liberation Mono',monospace;color:#7cacf8;-webkit-text-stroke:0.2px currentColor;"> </div>
<div class="a" style="left:1158.58px;top:944.54px;font:normal normal 21.7px/25px 'Liberation Mono',monospace;color:#a8c7fa;-webkit-text-stroke:0.2px currentColor;">class</div>
<div class="a" style="left:1223.68px;top:944.54px;font:normal normal 21.7px/25px 'Liberation Mono',monospace;color:#7cacf8;-webkit-text-stroke:0.2px currentColor;">=&quot;</div>
<div class="a" style="left:1249.72px;top:944.54px;font:normal normal 21.7px/25px 'Liberation Mono',monospace;color:#fc8f55;-webkit-text-stroke:0.2px currentColor;">team</div>
<div class="a" style="left:1301.80px;top:944.54px;font:normal normal 21.7px/25px 'Liberation Mono',monospace;color:#7cacf8;-webkit-text-stroke:0.2px currentColor;">&quot;&gt;</div>
<div class="btn" style="left:1333.34px;top:947.54px"><i style="left:3.3px"></i><i style="left:9.5px"></i><i style="left:15.7px"></i></div>
<div class="a" style="left:1367.14px;top:944.54px;font:normal normal 21.7px/25px 'Liberation Mono',monospace;color:#7cacf8;-webkit-text-stroke:0.2px currentColor;">&lt;/tr&gt;</div>
<svg class="a" style="left:1087.0px;top:979.3000000000001px;" width="11" height="15" viewBox="0 0 11 15"><polygon points="0,0 11,7.5 0,15" fill="#c0c0c0"/></svg>
<div class="a" style="left:1106.50px;top:979.10px;font:normal normal 21.7px/25px 'Liberation Mono',monospace;color:#7cacf8;-webkit-text-stroke:0.2px currentColor;">&lt;</div>
<div class="a" style="left:1119.52px;top:979.10px;font:normal normal 21.7px/25px 'Liberation Mono',monospace;color:#7cacf8;-webkit-text-stroke:0.2px currentColor;">tr</div>
<div class="a" style="left:1145.56px;top:979.10px;font:normal normal 21.7px/25px 'Liberation Mono',monospace;color:#7cacf8;-webkit-text-stroke:0.2px currentColor;"> </div>
<div class="a" style="left:1158.58px;top:979.10px;font:normal normal 21.7px/25px 'Liberation Mono',monospace;color:#a8c7fa;-webkit-text-stroke:0.2px currentColor;">class</div>
<div class="a" style="left:1223.68px;top:979.10px;font:normal normal 21.7px/25px 'Liberation Mono',monospace;color:#7cacf8;-webkit-text-stroke:0.2px currentColor;">=&quot;</div>
<div class="a" style="left:1249.72px;top:979.10px;font:normal normal 21.7px/25px 'Liberation Mono',monospace;color:#fc8f55;-webkit-text-stroke:0.2px currentColor;">team</div>
<div class="a" style="left:1301.80px;top:979.10px;font:normal normal 21.7px/25px 'Liberation Mono',monospace;color:#7cacf8;-webkit-text-stroke:0.2px currentColor;">&quot;&gt;</div>
<div class="btn" style="left:1333.34px;top:982.10px"><i style="left:3.3px"></i><i style="left:9.5px"></i><i style="left:15.7px"></i></div>
<div class="a" style="left:1367.14px;top:979.10px;font:normal normal 21.7px/25px 'Liberation Mono',monospace;color:#7cacf8;-webkit-text-stroke:0.2px currentColor;">&lt;/tr&gt;</div>
<svg class="a" style="left:1087.0px;top:1013.86px;" width="11" height="15" viewBox="0 0 11 15"><polygon points="0,0 11,7.5 0,15" fill="#c0c0c0"/></svg>
<div class="a" style="left:1106.50px;top:1013.66px;font:normal normal 21.7px/25px 'Liberation Mono',monospace;color:#7cacf8;-webkit-text-stroke:0.2px currentColor;">&lt;</div>
<div class="a" style="left:1119.52px;top:1013.66px;font:normal normal 21.7px/25px 'Liberation Mono',monospace;color:#7cacf8;-webkit-text-stroke:0.2px currentColor;">tr</div>
<div class="a" style="left:1145.56px;top:1013.66px;font:normal normal 21.7px/25px 'Liberation Mono',monospace;color:#7cacf8;-webkit-text-stroke:0.2px currentColor;"> </div>
<div class="a" style="left:1158.58px;top:1013.66px;font:normal normal 21.7px/25px 'Liberation Mono',monospace;color:#a8c7fa;-webkit-text-stroke:0.2px currentColor;">class</div>
<div class="a" style="left:1223.68px;top:1013.66px;font:normal normal 21.7px/25px 'Liberation Mono',monospace;color:#7cacf8;-webkit-text-stroke:0.2px currentColor;">=&quot;</div>
<div class="a" style="left:1249.72px;top:1013.66px;font:normal normal 21.7px/25px 'Liberation Mono',monospace;color:#fc8f55;-webkit-text-stroke:0.2px currentColor;">team</div>
<div class="a" style="left:1301.80px;top:1013.66px;font:normal normal 21.7px/25px 'Liberation Mono',monospace;color:#7cacf8;-webkit-text-stroke:0.2px currentColor;">&quot;&gt;</div>
<div class="btn" style="left:1333.34px;top:1016.66px"><i style="left:3.3px"></i><i style="left:9.5px"></i><i style="left:15.7px"></i></div>
<div class="a" style="left:1367.14px;top:1013.66px;font:normal normal 21.7px/25px 'Liberation Mono',monospace;color:#7cacf8;-webkit-text-stroke:0.2px currentColor;">&lt;/tr&gt;</div>
<svg class="a" style="left:1087.0px;top:1048.42px;" width="11" height="15" viewBox="0 0 11 15"><polygon points="0,0 11,7.5 0,15" fill="#c0c0c0"/></svg>
<div class="a" style="left:1106.50px;top:1048.22px;font:normal normal 21.7px/25px 'Liberation Mono',monospace;color:#7cacf8;-webkit-text-stroke:0.2px currentColor;">&lt;</div>
<div class="a" style="left:1119.52px;top:1048.22px;font:normal normal 21.7px/25px 'Liberation Mono',monospace;color:#7cacf8;-webkit-text-stroke:0.2px currentColor;">tr</div>
<div class="a" style="left:1145.56px;top:1048.22px;font:normal normal 21.7px/25px 'Liberation Mono',monospace;color:#7cacf8;-webkit-text-stroke:0.2px currentColor;"> </div>
<div class="a" style="left:1158.58px;top:1048.22px;font:normal normal 21.7px/25px 'Liberation Mono',monospace;color:#a8c7fa;-webkit-text-stroke:0.2px currentColor;">class</div>
<div class="a" style="left:1223.68px;top:1048.22px;font:normal normal 21.7px/25px 'Liberation Mono',monospace;color:#7cacf8;-webkit-text-stroke:0.2px currentColor;">=&quot;</div>
<div class="a" style="left:1249.72px;top:1048.22px;font:normal normal 21.7px/25px 'Liberation Mono',monospace;color:#fc8f55;-webkit-text-stroke:0.2px currentColor;">team</div>
<div class="a" style="left:1301.80px;top:1048.22px;font:normal normal 21.7px/25px 'Liberation Mono',monospace;color:#7cacf8;-webkit-text-stroke:0.2px currentColor;">&quot;&gt;</div>
<div class="btn" style="left:1333.34px;top:1051.22px"><i style="left:3.3px"></i><i style="left:9.5px"></i><i style="left:15.7px"></i></div>
<div class="a" style="left:1367.14px;top:1048.22px;font:normal normal 21.7px/25px 'Liberation Mono',monospace;color:#7cacf8;-webkit-text-stroke:0.2px currentColor;">&lt;/tr&gt;</div>
<svg class="a" style="left:1087.0px;top:1082.98px;" width="11" height="15" viewBox="0 0 11 15"><polygon points="0,0 11,7.5 0,15" fill="#c0c0c0"/></svg>
<div class="a" style="left:1106.50px;top:1082.78px;font:normal normal 21.7px/25px 'Liberation Mono',monospace;color:#7cacf8;-webkit-text-stroke:0.2px currentColor;">&lt;</div>
<div class="a" style="left:1119.52px;top:1082.78px;font:normal normal 21.7px/25px 'Liberation Mono',monospace;color:#7cacf8;-webkit-text-stroke:0.2px currentColor;">tr</div>
<div class="a" style="left:1145.56px;top:1082.78px;font:normal normal 21.7px/25px 'Liberation Mono',monospace;color:#7cacf8;-webkit-text-stroke:0.2px currentColor;"> </div>
<div class="a" style="left:1158.58px;top:1082.78px;font:normal normal 21.7px/25px 'Liberation Mono',monospace;color:#a8c7fa;-webkit-text-stroke:0.2px currentColor;">class</div>
<div class="a" style="left:1223.68px;top:1082.78px;font:normal normal 21.7px/25px 'Liberation Mono',monospace;color:#7cacf8;-webkit-text-stroke:0.2px currentColor;">=&quot;</div>
<div class="a" style="left:1249.72px;top:1082.78px;font:normal normal 21.7px/25px 'Liberation Mono',monospace;color:#fc8f55;-webkit-text-stroke:0.2px currentColor;">team</div>
<div class="a" style="left:1301.80px;top:1082.78px;font:normal normal 21.7px/25px 'Liberation Mono',monospace;color:#7cacf8;-webkit-text-stroke:0.2px currentColor;">&quot;&gt;</div>
<div class="btn" style="left:1333.34px;top:1085.78px"><i style="left:3.3px"></i><i style="left:9.5px"></i><i style="left:15.7px"></i></div>
<div class="a" style="left:1367.14px;top:1082.78px;font:normal normal 21.7px/25px 'Liberation Mono',monospace;color:#7cacf8;-webkit-text-stroke:0.2px currentColor;">&lt;/tr&gt;</div>
<svg class="a" style="left:1087.0px;top:1117.54px;" width="11" height="15" viewBox="0 0 11 15"><polygon points="0,0 11,7.5 0,15" fill="#c0c0c0"/></svg>
<div class="a" style="left:1106.50px;top:1117.34px;font:normal normal 21.7px/25px 'Liberation Mono',monospace;color:#7cacf8;-webkit-text-stroke:0.2px currentColor;">&lt;</div>
<div class="a" style="left:1119.52px;top:1117.34px;font:normal normal 21.7px/25px 'Liberation Mono',monospace;color:#7cacf8;-webkit-text-stroke:0.2px currentColor;">tr</div>
<div class="a" style="left:1145.56px;top:1117.34px;font:normal normal 21.7px/25px 'Liberation Mono',monospace;color:#7cacf8;-webkit-text-stroke:0.2px currentColor;"> </div>
<div class="a" style="left:1158.58px;top:1117.34px;font:normal normal 21.7px/25px 'Liberation Mono',monospace;color:#a8c7fa;-webkit-text-stroke:0.2px currentColor;">class</div>
<div class="a" style="left:1223.68px;top:1117.34px;font:normal normal 21.7px/25px 'Liberation Mono',monospace;color:#7cacf8;-webkit-text-stroke:0.2px currentColor;">=&quot;</div>
<div class="a" style="left:1249.72px;top:1117.34px;font:normal normal 21.7px/25px 'Liberation Mono',monospace;color:#fc8f55;-webkit-text-stroke:0.2px currentColor;">team</div>
<div class="a" style="left:1301.80px;top:1117.34px;font:normal normal 21.7px/25px 'Liberation Mono',monospace;color:#7cacf8;-webkit-text-stroke:0.2px currentColor;">&quot;&gt;</div>
<div class="btn" style="left:1333.34px;top:1120.34px"><i style="left:3.3px"></i><i style="left:9.5px"></i><i style="left:15.7px"></i></div>
<div class="a" style="left:1367.14px;top:1117.34px;font:normal normal 21.7px/25px 'Liberation Mono',monospace;color:#7cacf8;-webkit-text-stroke:0.2px currentColor;">&lt;/tr&gt;</div>
<div class="a" style="left:1841.2px;top:454px;width:31.5px;height:31.8px;border:2px solid #8d8784;border-radius:9px;background:#222;box-shadow:0 1px 3px rgba(0,0,0,.5)"></div>
<svg class="a" style="left:1845px;top:458px;" width="26" height="26" viewBox="0 0 26 26"><path d="M10.7,2.1 H3.4 V18.9 H8.3 L12,23 L15.7,18.9 H20.4 V13" stroke="#d0d0d0" stroke-width="2.1" fill="none"/><path d="M18.5,0.3 Q19.1,5.1 23.9,5.7 Q19.1,6.3 18.5,11.1 Q17.9,6.3 13.1,5.7 Q17.9,5.1 18.5,0.3Z" fill="#d0d0d0"/></svg>
</div></div>
<div class="a" style="left:1881.00px;top:150.00px;width:34.00px;height:972.00px;background:#424242;"></div>
<div class="a" style="left:1883.00px;top:253.00px;width:30.00px;height:191.60px;background:#686868;"></div>
<svg class="a" style="left:1889.7px;top:163.7px;" width="17" height="9" viewBox="0 0 17 9"><polygon points="0,9 17,9 8.5,0" fill="#fff"/></svg>
<svg class="a" style="left:1889.6px;top:1099.8px;" width="17" height="9" viewBox="0 0 17 9"><polygon points="0,0 17,0 8.5,9" fill="#fff"/></svg>
<div class="a" style="left:1915.00px;top:150.00px;width:2.00px;height:1020.00px;background:#5a5a5a;"></div>
<div class="a" style="left:906.00px;top:1122.00px;width:1009.00px;height:2.00px;background:#5a5a5a;"></div>
<div class="a" style="left:1548.00px;top:1124.00px;width:138.00px;height:46.00px;background:#004a77;"></div>
<div class="a" style="left:920.50px;top:1134.90px;font:normal normal 23.8px/27px 'Liberation Sans',sans-serif;color:#7cacf8;letter-spacing:1.47px">html</div>
<div class="a" style="left:996.50px;top:1134.90px;font:normal normal 23.8px/27px 'Liberation Sans',sans-serif;color:#7cacf8;letter-spacing:0.83px">body</div>
<div class="a" style="left:1078.40px;top:1134.90px;font:normal normal 23.8px/27px 'Liberation Sans',sans-serif;color:#7cacf8;letter-spacing:0.3px">div</div>
<div class="a" style="left:1109.72px;top:1134.90px;font:normal normal 23.8px/27px 'Liberation Sans',sans-serif;color:#a8c7fa;letter-spacing:0.3px">#page</div>
<div class="a" style="left:1205.20px;top:1134.90px;font:normal normal 23.8px/27px 'Liberation Sans',sans-serif;color:#7cacf8;letter-spacing:0px">section</div>
<div class="a" style="left:1280.61px;top:1134.90px;font:normal normal 23.8px/27px 'Liberation Sans',sans-serif;color:#a8c7fa;letter-spacing:0px">#hockey</div>
<div class="a" style="left:1397.40px;top:1134.90px;font:normal normal 23.8px/27px 'Liberation Sans',sans-serif;color:#7cacf8;letter-spacing:0px">div</div>
<div class="a" style="left:1427.82px;top:1134.90px;font:normal normal 23.8px/27px 'Liberation Sans',sans-serif;color:#a8c7fa;letter-spacing:0px">.container</div>
<div class="a" style="left:1561.50px;top:1134.90px;font:normal normal 23.8px/27px 'Liberation Sans',sans-serif;color:#7cacf8;letter-spacing:0px">table</div>
<div class="a" style="left:1613.11px;top:1134.90px;font:normal normal 23.8px/27px 'Liberation Sans',sans-serif;color:#a8c7fa;letter-spacing:0px">.table</div>
<div class="a" style="left:1917.00px;top:150.00px;width:647.00px;height:52.00px;background:#3c3c3c;"></div>
<div class="a" style="left:1917.00px;top:202.00px;width:647.00px;height:2.00px;background:#5a5a5a;"></div>
<div class="a" style="left:1936.90px;top:167.30px;font:normal normal 23.6px/26px 'Liberation Sans',sans-serif;color:#a8c7fa;-webkit-text-stroke:0.55px currentColor;letter-spacing:-0.26px">Styles</div>
<div class="a" style="left:2040.60px;top:167.30px;font:normal normal 23.6px/26px 'Liberation Sans',sans-serif;color:#c7c7c7;-webkit-text-stroke:0.55px currentColor;letter-spacing:0.93px">Computed</div>
<div class="a" style="left:2197.00px;top:167.30px;font:normal normal 23.6px/26px 'Liberation Sans',sans-serif;color:#c7c7c7;-webkit-text-stroke:0.55px currentColor;letter-spacing:0.42px">Layout</div>
<div class="a" style="left:2310.70px;top:167.30px;font:normal normal 23.6px/26px 'Liberation Sans',sans-serif;color:#c7c7c7;-webkit-text-stroke:0.55px currentColor;letter-spacing:0px">Event Listeners</div>
<div class="a" style="left:1917.00px;top:199.00px;width:104.00px;height:4.00px;background:#a8c7fa;border-radius:3px 3px 0 0"></div>
<svg class="a" style="left:2503px;top:165px;" width="24" height="22" viewBox="0 0 24 22"><path d="M3,2 L11,10.5 L3,19 M12.5,2 L20.5,10.5 L12.5,19" stroke="#c7c7c7" stroke-width="2.8" fill="none"/></svg>
<div class="a" style="left:1917.00px;top:256.00px;width:614.00px;height:2.00px;background:#5a5a5a;"></div>
<div class="a" style="left:1927.00px;top:210.00px;width:310.00px;height:40.00px;background:#3a3a3a;border-radius:20px"></div>
<svg class="a" style="left:1949px;top:220.6px;" width="20" height="20" viewBox="0 0 20 20"><path d="M1.2,1.2 H18.8 L11.3,10.5 V19.5 H8.7 V10.5 Z" fill="none" stroke="#c7c7c7" stroke-width="2.4" stroke-linejoin="miter"/></svg>
<div class="a" style="left:1982.50px;top:219.40px;font:normal normal 23.5px/26px 'Liberation Sans',sans-serif;color:#c4c4c4;">Filter</div>
<div class="a" style="left:2248.50px;top:219.60px;font:normal bold 22px/25px 'Liberation Mono',monospace;color:#c7c7c7;-webkit-text-stroke:0.2px currentColor;transform:scaleX(0.76);transform-origin:0 0">:hov</div>
<div class="a" style="left:2305.50px;top:219.60px;font:normal bold 22px/25px 'Liberation Mono',monospace;color:#c7c7c7;-webkit-text-stroke:0.2px currentColor;transform:scaleX(0.76);transform-origin:0 0">.cls</div>
<svg class="a" style="left:2371px;top:218px;" width="33" height="31" viewBox="0 0 33 31"><path d="M12,0 V24 M0,12 H24" stroke="#c7c7c7" stroke-width="2.6"/><polygon points="22.2,30 32.2,30 32.2,20" fill="#c7c7c7"/></svg>
<svg class="a" style="left:2427px;top:216px;" width="25" height="31" viewBox="0 0 25 31"><path d="M1.5,1.5 H23.5 V15.5 H1.5 Z M1.5,11 H23.5" stroke="#c7c7c7" stroke-width="2.7" fill="none"/><rect x="15" y="2" width="2.6" height="6" fill="#c7c7c7"/><rect x="8.8" y="15" width="7.6" height="15.5" rx="3" fill="#c7c7c7"/></svg>
<svg class="a" style="left:2478.5px;top:216px;" width="29" height="28.5" viewBox="0 0 29 28.5"><rect x="1.4" y="1.4" width="26.2" height="25.7" rx="2" stroke="#c7c7c7" stroke-width="2.7" fill="none"/><rect x="18.3" y="2" width="2.7" height="25" fill="#c7c7c7"/><polygon points="6,14 13,8.5 13,19.5" fill="#c7c7c7"/></svg>
<div class="a" style="left:2531.00px;top:204.00px;width:33.00px;height:966.00px;background:#3c3c3c;"></div>
<div class="a" style="left:2533.50px;top:238.50px;width:29.50px;height:162.00px;background:#6b6b6b;"></div>
<svg class="a" style="left:2539.5px;top:217.8px;" width="17" height="8.5" viewBox="0 0 17 8.5"><polygon points="0,8.5 17,8.5 8.5,0" fill="#8a8a8a"/></svg>
<svg class="a" style="left:2540px;top:1148px;" width="16.5" height="8.5" viewBox="0 0 16.5 8.5"><polygon points="0,0 16.5,0 8.25,8.5" fill="#fff"/></svg>
<div class="a" style="left:1917.00px;top:330.20px;width:614.00px;height:2.00px;background:#5a5a5a;"></div>
<div class="a" style="left:1917.00px;top:487.90px;width:614.00px;height:2.00px;background:#5a5a5a;"></div>
<div class="a" style="left:1917.00px;top:590.30px;width:614.00px;height:2.00px;background:#5a5a5a;"></div>
<div class="a" style="left:1917.00px;top:720.50px;width:614.00px;height:2.00px;background:#5a5a5a;"></div>
<div class="a" style="left:1917.00px;top:878.30px;width:614.00px;height:2.00px;background:#5a5a5a;"></div>
<div class="a" style="left:1917.00px;top:1148.20px;width:614.00px;height:2.00px;background:#666;"></div>
<div class="a" style="left:1917.00px;top:1150.20px;width:614.00px;height:20.00px;background:#2d2d30;"></div>
<div class="a" style="left:1925.50px;top:266.40px;font:normal normal 21.7px/25px 'Liberation Mono',monospace;color:#a0a0a0;-webkit-text-stroke:0.2px currentColor;">element.style</div>
<div class="a" style="left:2094.76px;top:266.40px;font:normal normal 21.7px/25px 'Liberation Mono',monospace;color:#e3e3e3;-webkit-text-stroke:0.2px currentColor;"> {</div>
<div class="a" style="left:1925.50px;top:294.40px;font:normal normal 21.7px/25px 'Liberation Mono',monospace;color:#e3e3e3;-webkit-text-stroke:0.2px currentColor;">}</div>
<div class="a" style="left:1925.50px;top:339.30px;font:normal normal 21.7px/25px 'Liberation Mono',monospace;color:#e3e3e3;-webkit-text-stroke:0.2px currentColor;">.table {</div>
<div class="a" style="left:2274.22px;top:342.60px;font:normal normal 21.7px/25px 'Liberation Mono',monospace;color:#e3e3e3;-webkit-text-stroke:0.2px currentColor;text-decoration:underline;text-underline-offset:3px;text-decoration-thickness:1.6px;text-decoration-color:#9a9a9a">bootstrap.min.css:5</div>
<div class="a" style="left:1961.30px;top:371.00px;font:normal normal 21.7px/25px 'Liberation Mono',monospace;color:#5cd5fb;-webkit-text-stroke:0.2px currentColor;">width</div>
<div class="a" style="left:2026.40px;top:371.00px;font:normal normal 21.7px/25px 'Liberation Mono',monospace;color:#e3e3e3;-webkit-text-stroke:0.2px currentColor;">: </div>
<div class="a" style="left:2052.44px;top:371.00px;font:normal normal 21.7px/25px 'Liberation Mono',monospace;color:#e3e3e3;-webkit-text-stroke:0.2px currentColor;">100%;</div>
<div class="a" style="left:1961.30px;top:399.20px;font:normal normal 21.7px/25px 'Liberation Mono',monospace;color:#5cd5fb;-webkit-text-stroke:0.2px currentColor;">max-width</div>
<div class="a" style="left:2078.48px;top:399.20px;font:normal normal 21.7px/25px 'Liberation Mono',monospace;color:#e3e3e3;-webkit-text-stroke:0.2px currentColor;">: </div>
<div class="a" style="left:2104.52px;top:399.20px;font:normal normal 21.7px/25px 'Liberation Mono',monospace;color:#e3e3e3;-webkit-text-stroke:0.2px currentColor;">100%;</div>
<div class="a" style="left:1961.30px;top:427.20px;font:normal normal 21.7px/25px 'Liberation Mono',monospace;color:#5cd5fb;-webkit-text-stroke:0.2px currentColor;">margin-bottom</div>
<div class="a" style="left:2130.56px;top:427.20px;font:normal normal 21.7px/25px 'Liberation Mono',monospace;color:#e3e3e3;-webkit-text-stroke:0.2px currentColor;">: </div>
<div class="a" style="left:2156.60px;top:427.20px;font:normal normal 21.7px/25px 'Liberation Mono',monospace;color:#e3e3e3;-webkit-text-stroke:0.2px currentColor;">20px;</div>
<div class="a" style="left:1925.50px;top:455.20px;font:normal normal 21.7px/25px 'Liberation Mono',monospace;color:#e3e3e3;-webkit-text-stroke:0.2px currentColor;">}</div>
<div class="a" style="left:1925.50px;top:498.20px;font:normal normal 21.7px/25px 'Liberation Mono',monospace;color:#e3e3e3;-webkit-text-stroke:0.2px currentColor;">table {</div>
<div class="a" style="left:2274.22px;top:501.50px;font:normal normal 21.7px/25px 'Liberation Mono',monospace;color:#e3e3e3;-webkit-text-stroke:0.2px currentColor;text-decoration:underline;text-underline-offset:3px;text-decoration-thickness:1.6px;text-decoration-color:#9a9a9a">bootstrap.min.css:5</div>
<div class="a" style="left:1961.30px;top:528.80px;font:normal normal 21.7px/25px 'Liberation Mono',monospace;color:#5cd5fb;-webkit-text-stroke:0.2px currentColor;">background-color</div>
<div class="a" style="left:2169.62px;top:528.80px;font:normal normal 21.7px/25px 'Liberation Mono',monospace;color:#e3e3e3;-webkit-text-stroke:0.2px currentColor;">: </div>
<div class="a" style="left:2204px;top:530.4px;width:19.8px;height:19.6px;border:1.5px solid #8a8a8a;background:conic-gradient(#d0d0d0 0 25%,#fff 0 50%,#d0d0d0 0 75%,#fff 0);background-size:100% 100%"></div>
<div class="a" style="left:2230.40px;top:528.80px;font:normal normal 21.7px/25px 'Liberation Mono',monospace;color:#e3e3e3;-webkit-text-stroke:0.2px currentColor;">transparent;</div>
<div class="a" style="left:1925.50px;top:557.00px;font:normal normal 21.7px/25px 'Liberation Mono',monospace;color:#e3e3e3;-webkit-text-stroke:0.2px currentColor;">}</div>
<div class="a" style="left:1925.50px;top:599.70px;font:normal normal 21.7px/25px 'Liberation Mono',monospace;color:#e3e3e3;-webkit-text-stroke:0.2px currentColor;">table {</div>
<div class="a" style="left:2274.22px;top:603.00px;font:normal normal 21.7px/25px 'Liberation Mono',monospace;color:#e3e3e3;-webkit-text-stroke:0.2px currentColor;text-decoration:underline;text-underline-offset:3px;text-decoration-thickness:1.6px;text-decoration-color:#9a9a9a">bootstrap.min.css:5</div>
<div class="a" style="left:1961.30px;top:631.50px;font:normal normal 21.7px/25px 'Liberation Mono',monospace;color:#5cd5fb;-webkit-text-stroke:0.2px currentColor;">border-spacing</div>
<div class="a" style="left:2143.58px;top:631.50px;font:normal normal 21.7px/25px 'Liberation Mono',monospace;color:#e3e3e3;-webkit-text-stroke:0.2px currentColor;">: </div>
<svg class="a" style="left:2171.7px;top:635.6px;" width="11" height="15.2" viewBox="0 0 11 15.2"><polygon points="0,0 11,7.6 0,15.2" fill="#bdbdbd"/></svg>
<div class="a" style="left:2193.70px;top:631.50px;font:normal normal 21.7px/25px 'Liberation Mono',monospace;color:#e3e3e3;-webkit-text-stroke:0.2px currentColor;">0;</div>
<div class="a" style="left:1961.30px;top:659.20px;font:normal normal 21.7px/25px 'Liberation Mono',monospace;color:#5cd5fb;-webkit-text-stroke:0.2px currentColor;">border-collapse</div>
<div class="a" style="left:2156.60px;top:659.20px;font:normal normal 21.7px/25px 'Liberation Mono',monospace;color:#e3e3e3;-webkit-text-stroke:0.2px currentColor;">: </div>
<div class="a" style="left:2182.64px;top:659.20px;font:normal normal 21.7px/25px 'Liberation Mono',monospace;color:#e3e3e3;-webkit-text-stroke:0.2px currentColor;">collapse;</div>
<div class="a" style="left:1925.50px;top:687.40px;font:normal normal 21.7px/25px 'Liberation Mono',monospace;color:#e3e3e3;-webkit-text-stroke:0.2px currentColor;">}</div>
<div class="a" style="left:1925.50px;top:732.00px;font:normal normal 21.7px/25px 'Liberation Mono',monospace;color:#e3e3e3;-webkit-text-stroke:0.2px currentColor;">* {</div>
<div class="a" style="left:2274.22px;top:735.30px;font:normal normal 21.7px/25px 'Liberation Mono',monospace;color:#e3e3e3;-webkit-text-stroke:0.2px currentColor;text-decoration:underline;text-underline-offset:3px;text-decoration-thickness:1.6px;text-decoration-color:#9a9a9a">bootstrap.min.css:5</div>
<div class="a" style="left:1961.30px;top:761.50px;font:normal normal 21.7px/25px 'Liberation Mono',monospace;color:#5cd5fb;-webkit-text-stroke:0.2px currentColor;">-webkit-box-sizing</div>
<div class="a" style="left:2195.66px;top:761.50px;font:normal normal 21.7px/25px 'Liberation Mono',monospace;color:#e3e3e3;-webkit-text-stroke:0.2px currentColor;">: </div>
<div class="a" style="left:2221.70px;top:761.50px;font:normal normal 21.7px/25px 'Liberation Mono',monospace;color:#e3e3e3;-webkit-text-stroke:0.2px currentColor;">border-box;</div>
<div class="a" style="left:1961.40px;top:770.80px;width:410.30px;height:2.00px;background:#e3e3e3;"></div>
<div class="a" style="left:1961.30px;top:789.60px;font:normal normal 21.7px/25px 'Liberation Mono',monospace;color:#8e8e8e;-webkit-text-stroke:0.2px currentColor;">-moz-box-sizing</div>
<div class="a" style="left:2156.60px;top:789.60px;font:normal normal 21.7px/25px 'Liberation Mono',monospace;color:#8e8e8e;-webkit-text-stroke:0.2px currentColor;">: </div>
<div class="a" style="left:2182.64px;top:789.60px;font:normal normal 21.7px/25px 'Liberation Mono',monospace;color:#8e8e8e;-webkit-text-stroke:0.2px currentColor;">border-box</div>
<div class="a" style="left:2312.84px;top:789.60px;font:normal normal 21.7px/25px 'Liberation Mono',monospace;color:#8e8e8e;-webkit-text-stroke:0.2px currentColor;">;</div>
<div class="a" style="left:2182.64px;top:799.50px;width:130.20px;height:1.60px;background:#8e8e8e;"></div>
<div class="a" style="left:1961.30px;top:816.50px;font:normal normal 21.7px/25px 'Liberation Mono',monospace;color:#5cd5fb;-webkit-text-stroke:0.2px currentColor;">box-sizing</div>
<div class="a" style="left:2091.50px;top:816.50px;font:normal normal 21.7px/25px 'Liberation Mono',monospace;color:#e3e3e3;-webkit-text-stroke:0.2px currentColor;">: </div>
<div class="a" style="left:2117.54px;top:816.50px;font:normal normal 21.7px/25px 'Liberation Mono',monospace;color:#e3e3e3;-webkit-text-stroke:0.2px currentColor;">border-box;</div>
<div class="a" style="left:1925.50px;top:844.50px;font:normal normal 21.7px/25px 'Liberation Mono',monospace;color:#e3e3e3;-webkit-text-stroke:0.2px currentColor;">}</div>
<div class="a" style="left:1925.50px;top:887.20px;font:italic normal 21.7px/25px 'Liberation Mono',monospace;color:#e3e3e3;-webkit-text-stroke:0.2px currentColor;">table {</div>
<div class="a" style="left:2249.58px;top:892.00px;font:italic normal 21.7px/25px 'Liberation Mono',monospace;color:#a0a0a0;-webkit-text-stroke:0.2px currentColor;">user agent stylesheet</div>
<div class="a" style="left:1961.30px;top:918.30px;font:italic normal 21.7px/25px 'Liberation Mono',monospace;color:#5cd5fb;-webkit-text-stroke:0.2px currentColor;">display</div>
<div class="a" style="left:2052.44px;top:918.30px;font:italic normal 21.7px/25px 'Liberation Mono',monospace;color:#e3e3e3;-webkit-text-stroke:0.2px currentColor;">: </div>
<div class="a" style="left:2078.48px;top:918.30px;font:italic normal 21.7px/25px 'Liberation Mono',monospace;color:#e3e3e3;-webkit-text-stroke:0.2px currentColor;">table;</div>
<div class="a" style="left:1961.30px;top:947.30px;font:italic normal 21.7px/25px 'Liberation Mono',monospace;color:#5cd5fb;-webkit-text-stroke:0.2px currentColor;">border-collapse</div>
<div class="a" style="left:2156.60px;top:947.30px;font:italic normal 21.7px/25px 'Liberation Mono',monospace;color:#e3e3e3;-webkit-text-stroke:0.2px currentColor;">: </div>
<div class="a" style="left:2182.64px;top:947.30px;font:italic normal 21.7px/25px 'Liberation Mono',monospace;color:#e3e3e3;-webkit-text-stroke:0.2px currentColor;">separate;</div>
<div class="a" style="left:1961.30px;top:956.80px;width:338.52px;height:2.00px;background:#e3e3e3;"></div>
<div class="a" style="left:1961.30px;top:976.00px;font:italic normal 21.7px/25px 'Liberation Mono',monospace;color:#5cd5fb;-webkit-text-stroke:0.2px currentColor;">box-sizing</div>
<div class="a" style="left:2091.50px;top:976.00px;font:italic normal 21.7px/25px 'Liberation Mono',monospace;color:#e3e3e3;-webkit-text-stroke:0.2px currentColor;">: </div>
<div class="a" style="left:2117.54px;top:976.00px;font:italic normal 21.7px/25px 'Liberation Mono',monospace;color:#e3e3e3;-webkit-text-stroke:0.2px currentColor;">border-box;</div>
<div class="a" style="left:1961.30px;top:985.50px;width:299.46px;height:2.00px;background:#e3e3e3;"></div>
<div class="a" style="left:1961.30px;top:1003.60px;font:italic normal 21.7px/25px 'Liberation Mono',monospace;color:#5cd5fb;-webkit-text-stroke:0.2px currentColor;">text-indent</div>
<div class="a" style="left:2104.52px;top:1003.60px;font:italic normal 21.7px/25px 'Liberation Mono',monospace;color:#e3e3e3;-webkit-text-stroke:0.2px currentColor;">: </div>
<div class="a" style="left:2130.56px;top:1003.60px;font:italic normal 21.7px/25px 'Liberation Mono',monospace;color:#e3e3e3;-webkit-text-stroke:0.2px currentColor;">initial;</div>
<div class="a" style="left:1961.30px;top:1032.00px;font:italic normal 21.7px/25px 'Liberation Mono',monospace;color:#5cd5fb;-webkit-text-stroke:0.2px currentColor;">unicode-bidi</div>
<div class="a" style="left:2117.54px;top:1032.00px;font:italic normal 21.7px/25px 'Liberation Mono',monospace;color:#e3e3e3;-webkit-text-stroke:0.2px currentColor;">: </div>
<div class="a" style="left:2143.58px;top:1032.00px;font:italic normal 21.7px/25px 'Liberation Mono',monospace;color:#e3e3e3;-webkit-text-stroke:0.2px currentColor;">isolate;</div>
<div class="a" style="left:1961.30px;top:1060.40px;font:italic normal 21.7px/25px 'Liberation Mono',monospace;color:#5cd5fb;-webkit-text-stroke:0.2px currentColor;">border-spacing</div>
<div class="a" style="left:2143.58px;top:1060.40px;font:italic normal 21.7px/25px 'Liberation Mono',monospace;color:#e3e3e3;-webkit-text-stroke:0.2px currentColor;">: </div>
<svg class="a" style="left:2172px;top:1064.5px;" width="11" height="15.2" viewBox="0 0 11 15.2"><polygon points="0,0 11,7.6 0,15.2" fill="#bdbdbd"/></svg>
<div class="a" style="left:2194.00px;top:1060.40px;font:italic normal 21.7px/25px 'Liberation Mono',monospace;color:#e3e3e3;-webkit-text-stroke:0.2px currentColor;">2px;</div>
<div class="a" style="left:1961.30px;top:1069.80px;width:283.70px;height:2.00px;background:#e3e3e3;"></div>
<div class="a" style="left:1961.30px;top:1087.50px;font:italic normal 21.7px/25px 'Liberation Mono',monospace;color:#5cd5fb;-webkit-text-stroke:0.2px currentColor;">border-color</div>
<div class="a" style="left:2117.54px;top:1087.50px;font:italic normal 21.7px/25px 'Liberation Mono',monospace;color:#e3e3e3;-webkit-text-stroke:0.2px currentColor;">: </div>
<svg class="a" style="left:2144px;top:1091.5px;" width="11" height="15.2" viewBox="0 0 11 15.2"><polygon points="0,0 11,7.6 0,15.2" fill="#bdbdbd"/></svg>
<div class="a" style="left:2171px;top:1088.7px;width:20px;height:19.5px;background:#808080;border:1px solid #9a9a9a"></div>
<div class="a" style="left:2197.40px;top:1087.50px;font:italic normal 21.7px/25px 'Liberation Mono',monospace;color:#e3e3e3;-webkit-text-stroke:0.2px currentColor;">gray;</div>
<div class="a" style="left:1925.50px;top:1118.00px;font:italic normal 21.7px/25px 'Liberation Mono',monospace;color:#e3e3e3;-webkit-text-stroke:0.2px currentColor;">}</div>
<div class="a" style="left:1927.00px;top:1161.30px;font:normal normal 23.8px/27px 'Liberation Sans',sans-serif;color:#c7c7c7;">Inherited from </div>
<div class="a" style="left:2083.00px;top:1164.00px;font:normal normal 21.7px/25px 'Liberation Mono',monospace;color:#5cd5fb;-webkit-text-stroke:0.2px currentColor;">div#page</div>
</div></div>
</body></html>
